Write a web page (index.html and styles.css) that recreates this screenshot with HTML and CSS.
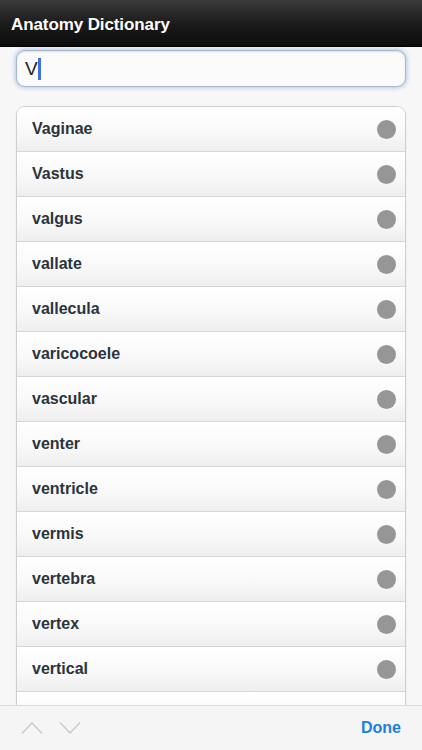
FILE: index.html
```html
<!DOCTYPE html>
<html>
<head>
<meta charset="utf-8">
<link rel="stylesheet" href="styles.css">
</head>
<body>
<div class="app">
  <header class="topbar"><h1 class="title">Anatomy Dictionary</h1></header>
  <main class="content">
    <div class="search"><span class="search-text">V</span><span class="caret"></span></div>
    <ul class="list">
      <li class="row"><span class="label">Vaginae</span><span class="dot"></span></li>
      <li class="row"><span class="label">Vastus</span><span class="dot"></span></li>
      <li class="row"><span class="label">valgus</span><span class="dot"></span></li>
      <li class="row"><span class="label">vallate</span><span class="dot"></span></li>
      <li class="row"><span class="label">vallecula</span><span class="dot"></span></li>
      <li class="row"><span class="label">varicocoele</span><span class="dot"></span></li>
      <li class="row"><span class="label">vascular</span><span class="dot"></span></li>
      <li class="row"><span class="label">venter</span><span class="dot"></span></li>
      <li class="row"><span class="label">ventricle</span><span class="dot"></span></li>
      <li class="row"><span class="label">vermis</span><span class="dot"></span></li>
      <li class="row"><span class="label">vertebra</span><span class="dot"></span></li>
      <li class="row"><span class="label">vertex</span><span class="dot"></span></li>
      <li class="row"><span class="label">vertical</span><span class="dot"></span></li>
      <li class="row"></li>
    </ul>
  </main>
  <footer class="toolbar">
    <div class="arrows">
      <svg class="arrow" width="22" height="12" viewBox="0 0 22 12"><path d="M1 11.5 L11 1 L21 11.5" fill="none" stroke="#c9c9cc" stroke-width="1.4"/></svg>
      <svg class="arrow" width="22" height="12" viewBox="0 0 22 12"><path d="M1 0.5 L11 11 L21 0.5" fill="none" stroke="#c9c9cc" stroke-width="1.4"/></svg>
    </div>
    <span class="done">Done</span>
  </footer>
</div>
</body>
</html>
```
FILE: styles.css
```css
* { box-sizing: border-box; }
html, body { margin: 0; padding: 0; }
body {
  width: 422px;
  height: 750px;
  overflow: hidden;
  font-family: "Liberation Sans", Arial, sans-serif;
  background: #f7f7f7;
}
.app {
  display: flex;
  flex-direction: column;
  height: 750px;
}
.topbar {
  height: 47px;
  flex: none;
  background: linear-gradient(#3b3b3b 0%, #1c1c1c 50%, #0c0c0c 100%);
  border-bottom: 1px solid #000;
  display: flex;
  align-items: center;
  padding: 3px 11px 0;
}
.title {
  margin: 0;
  color: #fff;
  font-size: 17px;
  font-weight: bold;
  letter-spacing: -0.1px;
}
.content {
  flex: 1;
  overflow: hidden;
  padding: 3px 16px 0;
  background: #f7f7f7;
}
.search {
  height: 37px;
  background: #fbfbfb;
  border: 1px solid #a9b9cc;
  border-radius: 9px;
  box-shadow: 0 0 4px 1px rgba(120, 160, 220, 0.55), inset 0 1px 2px rgba(0,0,0,0.12);
  display: flex;
  align-items: center;
  padding: 0 8px;
}
.search-text {
  font-size: 19px;
  color: #222;
}
.caret {
  width: 3px;
  height: 22px;
  background: #3f6fe0;
}
.list {
  list-style: none;
  margin: 19px 0 0;
  padding: 0;
  background: #fff;
  border: 1px solid #cfcfcf;
  border-radius: 9px;
  box-shadow: 0 1px 2px rgba(0,0,0,0.08);
  overflow: hidden;
}
.row {
  height: 45px;
  display: flex;
  align-items: center;
  justify-content: space-between;
  padding: 0 9px 0 15px;
  background: linear-gradient(#ffffff 0%, #f8f8f8 60%, #eeeeee 100%);
  border-bottom: 1px solid #d6d6d6;
}
.label {
  font-size: 16px;
  font-weight: bold;
  color: #2b343c;
}
.dot {
  width: 19px;
  height: 19px;
  border-radius: 50%;
  background: #969696;
}
.toolbar {
  height: 45px;
  flex: none;
  background: #f5f5f6;
  border-top: 1px solid #dcdcde;
  display: flex;
  align-items: center;
  justify-content: space-between;
  padding: 0 21px 0 21px;
}
.arrows {
  display: flex;
  gap: 16px;
  align-items: center;
}
.done {
  color: #1a7fe0;
  font-size: 16px;
  font-weight: bold;
}
```
